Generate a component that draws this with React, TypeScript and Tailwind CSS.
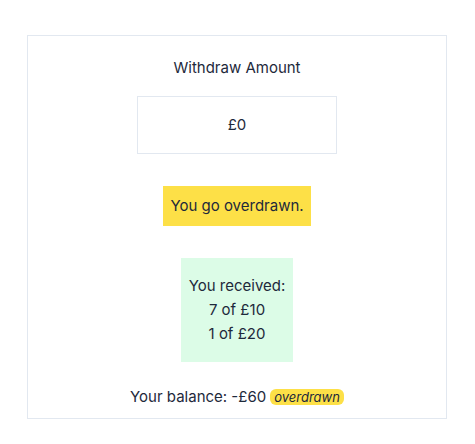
export default function App() {
  const received = [
    { count: 7, note: 10 },
    { count: 1, note: 20 },
  ];

  return (
    <div
      className="min-h-[444px] bg-white pt-[35px] text-[#1e293b]"
      style={{ fontFamily: "Inter, 'Noto Sans', sans-serif" }}
    >
      <div className="ml-[27px] flex h-[384px] w-[420px] flex-col items-center border border-[#e2e8f0] pt-[20px] text-[15px] leading-6">
        <label className="h-6">Withdraw Amount</label>

        <div className="mt-4 flex h-[58px] w-[200px] items-center justify-center border border-[#e2e8f0]">
          £0
        </div>

        <div className="mt-[32px] flex h-10 w-[148px] items-center justify-center whitespace-nowrap bg-[#fde047]">
          You go overdrawn.
        </div>

        <div className="mt-8 flex w-[112px] flex-col items-center whitespace-nowrap bg-[#dcfce7] py-4">
          <p>You received:</p>
          {received.map((r) => (
            <p key={r.note}>
              {r.count} of £{r.note}
            </p>
          ))}
        </div>

        <div className="mt-[23px] flex items-center gap-1">
          <span>Your balance: -£60</span>
          <span className="rounded-md bg-[#fde047] px-1 text-[13px] italic leading-4">
            overdrawn
          </span>
        </div>
      </div>
    </div>
  );
}
